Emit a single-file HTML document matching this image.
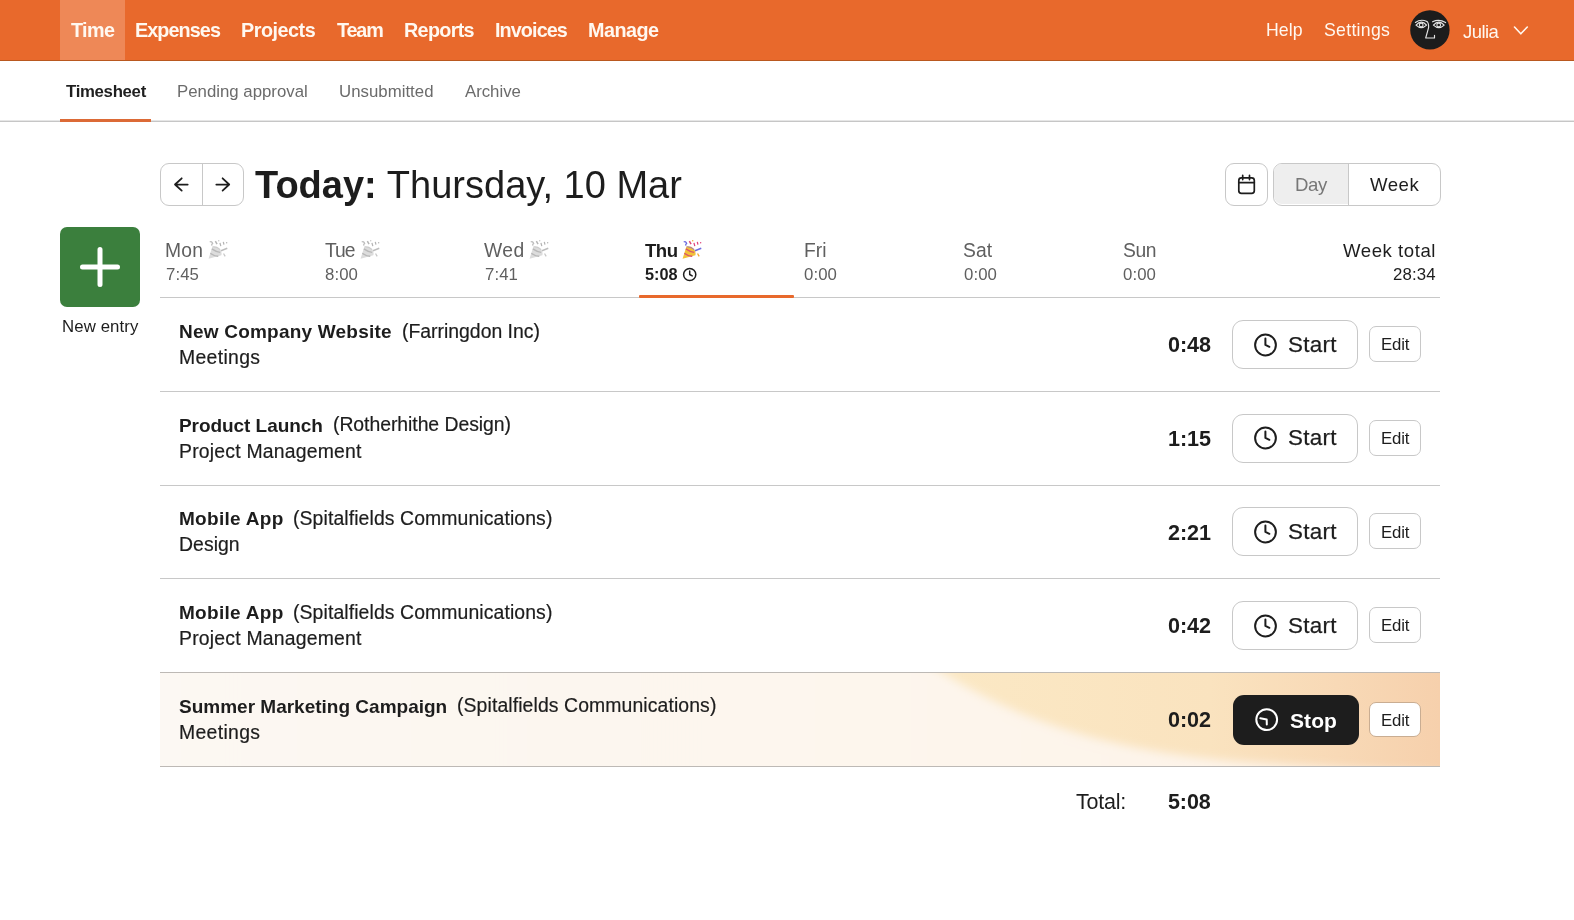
<!DOCTYPE html>
<html><head><meta charset="utf-8"><title>Timesheet</title>
<style>
html,body{margin:0;padding:0;background:#fff;}
body{width:1574px;height:920px;position:relative;overflow:hidden;font-family:"Liberation Sans",sans-serif;}
.t{position:absolute;line-height:1;white-space:pre;will-change:transform;}
</style></head><body>
<div style="position:absolute;left:0px;top:0px;width:1574px;height:60px;box-sizing:border-box;background:#e8692c;"></div>
<div style="position:absolute;left:0px;top:60px;width:1574px;height:1px;box-sizing:border-box;background:#b9581f;"></div>
<div style="position:absolute;left:60px;top:0px;width:65px;height:60px;box-sizing:border-box;background:#ee8857;"></div>
<div class="t" style="left:71.00px;top:20.84px;font-size:19.8px;font-weight:700;color:#fff8f0;letter-spacing:-0.639px;">Time</div>
<div class="t" style="left:135.30px;top:20.84px;font-size:19.8px;font-weight:700;color:#fff8f0;letter-spacing:-0.920px;">Expenses</div>
<div class="t" style="left:240.70px;top:20.84px;font-size:19.8px;font-weight:700;color:#fff8f0;letter-spacing:-0.480px;">Projects</div>
<div class="t" style="left:336.50px;top:20.84px;font-size:19.8px;font-weight:700;color:#fff8f0;letter-spacing:-1.139px;">Team</div>
<div class="t" style="left:403.70px;top:20.84px;font-size:19.8px;font-weight:700;color:#fff8f0;letter-spacing:-0.688px;">Reports</div>
<div class="t" style="left:494.60px;top:20.84px;font-size:19.8px;font-weight:700;color:#fff8f0;letter-spacing:-0.905px;">Invoices</div>
<div class="t" style="left:587.50px;top:20.84px;font-size:19.8px;font-weight:700;color:#fff8f0;letter-spacing:-0.520px;">Manage</div>
<div class="t" style="left:1266.20px;top:22.02px;font-size:17.7px;color:#fff8f0;letter-spacing:0.074px;">Help</div>
<div class="t" style="left:1323.90px;top:22.02px;font-size:17.7px;color:#fff8f0;letter-spacing:0.280px;">Settings</div>
<div class="t" style="left:1462.70px;top:22.64px;font-size:18.5px;color:#fff8f0;letter-spacing:-0.570px;">Julia</div>
<svg style="position:absolute;left:1512px;top:24px" width="18" height="13" viewBox="0 0 18 13"><path d="M2.5 3 L8.8 9.8 L15.3 3" fill="none" stroke="#fff8f0" stroke-width="1.6" stroke-linecap="round" stroke-linejoin="round"/></svg>
<svg style="position:absolute;left:1408px;top:8px" width="44" height="44" viewBox="0 0 44 44">
<circle cx="21.9" cy="21.9" r="19.7" fill="#1c1c1c"/>
<g fill="none" stroke="#e4e4e4" stroke-width="1.15" stroke-linecap="round" stroke-linejoin="round">
<path d="M7.4 14.4 Q13 10.6 19 13.6"/>
<path d="M8 17.2 Q13.3 11 18.6 17.2 Q13.3 22.2 8 17.2 Z"/>
<path d="M24.6 13.8 Q31 10.6 37.6 14.6"/>
<path d="M25.4 17.2 Q30.8 11 36.2 17.2 Q30.8 22.2 25.4 17.2 Z"/>
<path d="M19 13.6 Q20.9 15 20.6 19.6 L17.7 30 L26.5 30 L26.5 27.2"/>
</g>
<circle cx="13.2" cy="17" r="2.4" fill="#e4e4e4"/><circle cx="13.2" cy="17" r="1.3" fill="#1c1c1c"/>
<circle cx="30.7" cy="17" r="2.4" fill="#e4e4e4"/><circle cx="30.7" cy="17" r="1.3" fill="#1c1c1c"/>
</svg>
<div class="t" style="left:66.00px;top:84.48px;font-size:16.8px;font-weight:700;color:#1f1f1f;letter-spacing:-0.311px;">Timesheet</div>
<div class="t" style="left:176.70px;top:84.48px;font-size:16.8px;color:#6b6b6b;letter-spacing:0.008px;">Pending approval</div>
<div class="t" style="left:338.90px;top:84.48px;font-size:16.8px;color:#6b6b6b;letter-spacing:0.026px;">Unsubmitted</div>
<div class="t" style="left:464.70px;top:84.48px;font-size:16.8px;color:#6b6b6b;letter-spacing:-0.017px;">Archive</div>
<div style="position:absolute;left:0px;top:120px;width:1574px;height:1px;box-sizing:border-box;background:#e6e6e6;"></div>
<div style="position:absolute;left:0px;top:121px;width:1574px;height:1px;box-sizing:border-box;background:#c6c6c6;"></div>
<div style="position:absolute;left:60px;top:119px;width:91px;height:3px;box-sizing:border-box;background:#dc6a36;"></div>
<div style="position:absolute;left:160px;top:163px;width:84px;height:43px;box-sizing:border-box;border:1.2px solid #c8c8c8;border-radius:9px;background:#fff;"></div>
<div style="position:absolute;left:201.5px;top:163px;width:1.1999999999999886px;height:43px;box-sizing:border-box;background:#c8c8c8;"></div>
<svg style="position:absolute;left:160px;top:163px" width="84" height="43" viewBox="0 0 84 43"><g fill="none" stroke="#1d1d1d" stroke-width="1.75" stroke-linecap="round" stroke-linejoin="round"><path d="M27.7 21.5 H15 M21.7 15.3 L15 21.5 L21.7 27.6"/><path d="M56.3 21.5 H69.2 M62.6 15.3 L69.2 21.5 L62.6 27.6"/></g></svg>
<div class="t" style="left:255.00px;top:166.03px;font-size:38px;font-weight:700;color:#1d1d1d;letter-spacing:0.000px;">Today:</div>
<div class="t" style="left:376.74px;top:166.03px;font-size:38px;color:#1d1d1d;letter-spacing:0.000px;"> Thursday, 10 Mar</div>
<div style="position:absolute;left:1225px;top:163px;width:42.5px;height:42.5px;box-sizing:border-box;border:1.2px solid #c8c8c8;border-radius:9px;background:#fff;"></div>
<svg style="position:absolute;left:1230px;top:168px" width="32" height="32" viewBox="0 0 32 32"><g fill="none" stroke="#1d1d1d" stroke-width="1.7" stroke-linecap="round"><rect x="8.8" y="9.8" width="15.5" height="15.5" rx="2.6"/><path d="M8.8 14.6 H24.3"/><path d="M12.7 7.4 V11.6 M19.5 7.4 V11.6"/></g></svg>
<div style="position:absolute;left:1272.5px;top:163px;width:168.0px;height:42.5px;box-sizing:border-box;border:1.2px solid #c8c8c8;border-radius:9px;background:#fff;overflow:hidden;"></div>
<div style="position:absolute;left:1273.5px;top:164.2px;width:74.5px;height:40.10000000000002px;box-sizing:border-box;background:#eeeeee;border-radius:8px 0 0 8px;"></div>
<div style="position:absolute;left:1347.8px;top:163px;width:1.2000000000000455px;height:42.5px;box-sizing:border-box;background:#c8c8c8;"></div>
<div class="t" style="left:1294.90px;top:175.56px;font-size:18.6px;color:#777777;letter-spacing:-0.326px;">Day</div>
<div class="t" style="left:1369.50px;top:175.56px;font-size:18.6px;color:#1d1d1d;letter-spacing:0.523px;">Week</div>
<div style="position:absolute;left:60px;top:227px;width:80px;height:80px;box-sizing:border-box;background:#3b7f3d;border-radius:7px;"></div>
<svg style="position:absolute;left:60px;top:227px" width="80" height="80" viewBox="0 0 80 80"><g stroke="#fff" stroke-width="5" stroke-linecap="round"><path d="M22.5 40 H57.5 M40 22.5 V57.5"/></g></svg>
<div class="t" style="left:62.00px;top:319.18px;font-size:16.8px;color:#1d1d1d;letter-spacing:0.108px;">New entry</div>
<div class="t" style="left:165.20px;top:241.36px;font-size:19.3px;color:#5f5f5f;letter-spacing:0.218px;">Mon</div>
<div class="t" style="left:165.70px;top:266.68px;font-size:16.8px;color:#5f5f5f;letter-spacing:0.075px;">7:45</div>
<svg style="position:absolute;left:207.20000000000002px;top:238.4px" width="23" height="23" viewBox="0 0 22 22">
<path d="M1.5 19.8 L5.2 8.2 Q9 7 12.2 10.2 Q14.6 13.2 13.8 16.4 Z" fill="#dcdcdc"/>
<path d="M3.2 14.6 Q7.2 17.6 10.8 17.4" stroke="#b8b8b8" stroke-width="1.3" fill="none"/>
<path d="M4.6 10.4 Q9 13.4 12.6 13.8" stroke="#b8b8b8" stroke-width="1.2" fill="none"/>
<path d="M5.4 8.4 Q9.6 8.2 12.6 11.2" stroke="#c4c4c4" stroke-width="1" fill="none" opacity=".7"/>
<path d="M2.6 3.8 Q4.6 2.8 5.4 5.2 Q3.8 6.4 5 7.2" stroke="#bdbdbd" stroke-width="1.2" fill="none"/>
<path d="M8 3 L9.6 5.8" stroke="#b5b5b5" stroke-width="1.4" fill="none"/>
<path d="M12.4 4.6 L13.2 7.8 M15.6 3.8 L16.2 6.4" stroke="#b5b5b5" stroke-width="1.2" fill="none"/>
<path d="M13.4 12.2 L19.4 9.8" stroke="#bdbdbd" stroke-width="1.3" fill="none"/>
<path d="M15.8 14.8 L17.4 17.6" stroke="#c8c8c8" stroke-width="1.2" fill="none"/>
<circle cx="11.2" cy="2.6" r=".7" fill="#c8c8c8"/><circle cx="18.8" cy="4.6" r=".7" fill="#b5b5b5"/>
</svg>
<div class="t" style="left:324.80px;top:241.36px;font-size:19.3px;color:#5f5f5f;letter-spacing:-0.981px;">Tue</div>
<div class="t" style="left:325.30px;top:266.68px;font-size:16.8px;color:#5f5f5f;letter-spacing:0.075px;">8:00</div>
<svg style="position:absolute;left:358.59999999999997px;top:238.4px" width="23" height="23" viewBox="0 0 22 22">
<path d="M1.5 19.8 L5.2 8.2 Q9 7 12.2 10.2 Q14.6 13.2 13.8 16.4 Z" fill="#dcdcdc"/>
<path d="M3.2 14.6 Q7.2 17.6 10.8 17.4" stroke="#b8b8b8" stroke-width="1.3" fill="none"/>
<path d="M4.6 10.4 Q9 13.4 12.6 13.8" stroke="#b8b8b8" stroke-width="1.2" fill="none"/>
<path d="M5.4 8.4 Q9.6 8.2 12.6 11.2" stroke="#c4c4c4" stroke-width="1" fill="none" opacity=".7"/>
<path d="M2.6 3.8 Q4.6 2.8 5.4 5.2 Q3.8 6.4 5 7.2" stroke="#bdbdbd" stroke-width="1.2" fill="none"/>
<path d="M8 3 L9.6 5.8" stroke="#b5b5b5" stroke-width="1.4" fill="none"/>
<path d="M12.4 4.6 L13.2 7.8 M15.6 3.8 L16.2 6.4" stroke="#b5b5b5" stroke-width="1.2" fill="none"/>
<path d="M13.4 12.2 L19.4 9.8" stroke="#bdbdbd" stroke-width="1.3" fill="none"/>
<path d="M15.8 14.8 L17.4 17.6" stroke="#c8c8c8" stroke-width="1.2" fill="none"/>
<circle cx="11.2" cy="2.6" r=".7" fill="#c8c8c8"/><circle cx="18.8" cy="4.6" r=".7" fill="#b5b5b5"/>
</svg>
<div class="t" style="left:484.10px;top:241.36px;font-size:19.3px;color:#5f5f5f;letter-spacing:0.421px;">Wed</div>
<div class="t" style="left:484.60px;top:266.68px;font-size:16.8px;color:#5f5f5f;letter-spacing:0.075px;">7:41</div>
<svg style="position:absolute;left:528.3px;top:238.4px" width="23" height="23" viewBox="0 0 22 22">
<path d="M1.5 19.8 L5.2 8.2 Q9 7 12.2 10.2 Q14.6 13.2 13.8 16.4 Z" fill="#dcdcdc"/>
<path d="M3.2 14.6 Q7.2 17.6 10.8 17.4" stroke="#b8b8b8" stroke-width="1.3" fill="none"/>
<path d="M4.6 10.4 Q9 13.4 12.6 13.8" stroke="#b8b8b8" stroke-width="1.2" fill="none"/>
<path d="M5.4 8.4 Q9.6 8.2 12.6 11.2" stroke="#c4c4c4" stroke-width="1" fill="none" opacity=".7"/>
<path d="M2.6 3.8 Q4.6 2.8 5.4 5.2 Q3.8 6.4 5 7.2" stroke="#bdbdbd" stroke-width="1.2" fill="none"/>
<path d="M8 3 L9.6 5.8" stroke="#b5b5b5" stroke-width="1.4" fill="none"/>
<path d="M12.4 4.6 L13.2 7.8 M15.6 3.8 L16.2 6.4" stroke="#b5b5b5" stroke-width="1.2" fill="none"/>
<path d="M13.4 12.2 L19.4 9.8" stroke="#bdbdbd" stroke-width="1.3" fill="none"/>
<path d="M15.8 14.8 L17.4 17.6" stroke="#c8c8c8" stroke-width="1.2" fill="none"/>
<circle cx="11.2" cy="2.6" r=".7" fill="#c8c8c8"/><circle cx="18.8" cy="4.6" r=".7" fill="#b5b5b5"/>
</svg>
<div class="t" style="left:644.60px;top:241.66px;font-size:18.6px;font-weight:700;color:#1d1d1d;letter-spacing:-0.529px;">Thu</div>
<div class="t" style="left:644.60px;top:266.10px;font-size:16.3px;font-weight:700;color:#1d1d1d;letter-spacing:-0.031px;">5:08</div>
<svg style="position:absolute;left:681.0px;top:238.4px" width="23" height="23" viewBox="0 0 22 22">
<path d="M1.5 19.8 L5.2 8.2 Q9 7 12.2 10.2 Q14.6 13.2 13.8 16.4 Z" fill="#f2c23a"/>
<path d="M3.2 14.6 Q7.2 17.6 10.8 17.4" stroke="#d9556e" stroke-width="1.3" fill="none"/>
<path d="M4.6 10.4 Q9 13.4 12.6 13.8" stroke="#d9556e" stroke-width="1.2" fill="none"/>
<path d="M5.4 8.4 Q9.6 8.2 12.6 11.2" stroke="#8a5fd0" stroke-width="1" fill="none" opacity=".7"/>
<path d="M2.6 3.8 Q4.6 2.8 5.4 5.2 Q3.8 6.4 5 7.2" stroke="#6b6be0" stroke-width="1.2" fill="none"/>
<path d="M8 3 L9.6 5.8" stroke="#e0457a" stroke-width="1.4" fill="none"/>
<path d="M12.4 4.6 L13.2 7.8 M15.6 3.8 L16.2 6.4" stroke="#e0457a" stroke-width="1.2" fill="none"/>
<path d="M13.4 12.2 L19.4 9.8" stroke="#6b6be0" stroke-width="1.3" fill="none"/>
<path d="M15.8 14.8 L17.4 17.6" stroke="#f0a830" stroke-width="1.2" fill="none"/>
<circle cx="11.2" cy="2.6" r=".7" fill="#f0a830"/><circle cx="18.8" cy="4.6" r=".7" fill="#e0457a"/>
</svg>
<svg style="position:absolute;left:681px;top:266px" width="17" height="17" viewBox="0 0 17 17"><g fill="none" stroke="#1d1d1d" stroke-width="1.5" stroke-linecap="round" stroke-linejoin="round"><circle cx="8.7" cy="8.5" r="6.1"/><path d="M8.7 5 V8.5 L11.2 9.9"/></g></svg>
<div class="t" style="left:803.50px;top:241.36px;font-size:19.3px;color:#5f5f5f;letter-spacing:-0.035px;">Fri</div>
<div class="t" style="left:804.00px;top:266.68px;font-size:16.8px;color:#5f5f5f;letter-spacing:0.075px;">0:00</div>
<div class="t" style="left:963.30px;top:241.36px;font-size:19.3px;color:#5f5f5f;letter-spacing:0.077px;">Sat</div>
<div class="t" style="left:963.80px;top:266.68px;font-size:16.8px;color:#5f5f5f;letter-spacing:0.075px;">0:00</div>
<div class="t" style="left:1122.70px;top:241.36px;font-size:19.3px;color:#5f5f5f;letter-spacing:-0.381px;">Sun</div>
<div class="t" style="left:1123.20px;top:266.68px;font-size:16.8px;color:#5f5f5f;letter-spacing:0.075px;">0:00</div>
<div class="t" style="right:138.25px;top:241.86px;font-size:18.6px;color:#1d1d1d;letter-spacing:0.547px;">Week total</div>
<div class="t" style="right:138.65px;top:267.18px;font-size:16.8px;color:#1d1d1d;letter-spacing:0.152px;">28:34</div>
<div style="position:absolute;left:160px;top:297px;width:1280px;height:1px;box-sizing:border-box;background:#c8c8c8;"></div>
<div style="position:absolute;left:639px;top:295px;width:155px;height:3px;box-sizing:border-box;background:#e8692c;border-radius:1px;"></div>
<div class="t" style="left:179.20px;top:321.92px;font-size:19px;font-weight:700;color:#1d1d1d;letter-spacing:0.216px;">New Company Website</div>
<div class="t" style="left:401.60px;top:321.58px;font-size:19.4px;color:#1d1d1d;letter-spacing:-0.001px;-webkit-text-stroke:0.2px #1d1d1d;">(Farringdon Inc)</div>
<div class="t" style="left:179.20px;top:347.88px;font-size:19.4px;color:#1d1d1d;letter-spacing:0.322px;-webkit-text-stroke:0.2px #1d1d1d;">Meetings</div>
<div class="t" style="right:363.26px;top:334.22px;font-size:21.6px;font-weight:700;color:#1d1d1d;letter-spacing:-0.058px;">0:48</div>
<div style="position:absolute;left:1232.3px;top:320.1px;width:126.20000000000005px;height:49.0px;box-sizing:border-box;border:1.2px solid #c8c8c8;border-radius:11px;background:#fff;"></div>
<svg style="position:absolute;left:1248px;top:326.5px" width="36" height="36" viewBox="0 0 36 36"><g fill="none" stroke="#1d1d1d" stroke-width="2" stroke-linecap="round" stroke-linejoin="round"><circle cx="17.5" cy="18" r="10.4"/><path d="M17.4 11.6 V17.9 L21.4 19.8"/></g></svg>
<div class="t" style="left:1288.20px;top:333.54px;font-size:22.4px;color:#1d1d1d;letter-spacing:0.299px;-webkit-text-stroke:0.25px #1d1d1d;">Start</div>
<div style="position:absolute;left:1369px;top:326.1px;width:52px;height:36.0px;box-sizing:border-box;border:1.2px solid #c8c8c8;border-radius:7px;background:#fff;"></div>
<div class="t" style="left:1380.60px;top:337.48px;font-size:16.8px;color:#1d1d1d;letter-spacing:-0.162px;">Edit</div>
<div style="position:absolute;left:160px;top:391px;width:1280px;height:1px;box-sizing:border-box;background:#c8c8c8;"></div>
<div class="t" style="left:179.20px;top:415.59px;font-size:19px;font-weight:700;color:#1d1d1d;letter-spacing:-0.059px;">Product Launch</div>
<div class="t" style="left:332.60px;top:415.25px;font-size:19.4px;color:#1d1d1d;letter-spacing:-0.050px;-webkit-text-stroke:0.2px #1d1d1d;">(Rotherhithe Design)</div>
<div class="t" style="left:179.20px;top:441.55px;font-size:19.4px;color:#1d1d1d;letter-spacing:0.205px;-webkit-text-stroke:0.2px #1d1d1d;">Project Management</div>
<div class="t" style="right:363.26px;top:427.89px;font-size:21.6px;font-weight:700;color:#1d1d1d;letter-spacing:-0.058px;">1:15</div>
<div style="position:absolute;left:1232.3px;top:413.77000000000004px;width:126.20000000000005px;height:49.0px;box-sizing:border-box;border:1.2px solid #c8c8c8;border-radius:11px;background:#fff;"></div>
<svg style="position:absolute;left:1248px;top:420.2px" width="36" height="36" viewBox="0 0 36 36"><g fill="none" stroke="#1d1d1d" stroke-width="2" stroke-linecap="round" stroke-linejoin="round"><circle cx="17.5" cy="18" r="10.4"/><path d="M17.4 11.6 V17.9 L21.4 19.8"/></g></svg>
<div class="t" style="left:1288.20px;top:427.21px;font-size:22.4px;color:#1d1d1d;letter-spacing:0.299px;-webkit-text-stroke:0.25px #1d1d1d;">Start</div>
<div style="position:absolute;left:1369px;top:419.77000000000004px;width:52px;height:35.99999999999994px;box-sizing:border-box;border:1.2px solid #c8c8c8;border-radius:7px;background:#fff;"></div>
<div class="t" style="left:1380.60px;top:431.15px;font-size:16.8px;color:#1d1d1d;letter-spacing:-0.162px;">Edit</div>
<div style="position:absolute;left:160px;top:485px;width:1280px;height:1px;box-sizing:border-box;background:#c8c8c8;"></div>
<div class="t" style="left:179.20px;top:509.26px;font-size:19px;font-weight:700;color:#1d1d1d;letter-spacing:0.293px;">Mobile App</div>
<div class="t" style="left:293.40px;top:508.92px;font-size:19.4px;color:#1d1d1d;letter-spacing:0.103px;-webkit-text-stroke:0.2px #1d1d1d;">(Spitalfields Communications)</div>
<div class="t" style="left:179.20px;top:535.22px;font-size:19.4px;color:#1d1d1d;letter-spacing:0.052px;-webkit-text-stroke:0.2px #1d1d1d;">Design</div>
<div class="t" style="right:363.26px;top:521.56px;font-size:21.6px;font-weight:700;color:#1d1d1d;letter-spacing:-0.058px;">2:21</div>
<div style="position:absolute;left:1232.3px;top:507.44000000000005px;width:126.20000000000005px;height:49.0px;box-sizing:border-box;border:1.2px solid #c8c8c8;border-radius:11px;background:#fff;"></div>
<svg style="position:absolute;left:1248px;top:513.8px" width="36" height="36" viewBox="0 0 36 36"><g fill="none" stroke="#1d1d1d" stroke-width="2" stroke-linecap="round" stroke-linejoin="round"><circle cx="17.5" cy="18" r="10.4"/><path d="M17.4 11.6 V17.9 L21.4 19.8"/></g></svg>
<div class="t" style="left:1288.20px;top:520.88px;font-size:22.4px;color:#1d1d1d;letter-spacing:0.299px;-webkit-text-stroke:0.25px #1d1d1d;">Start</div>
<div style="position:absolute;left:1369px;top:513.44px;width:52px;height:36.0px;box-sizing:border-box;border:1.2px solid #c8c8c8;border-radius:7px;background:#fff;"></div>
<div class="t" style="left:1380.60px;top:524.82px;font-size:16.8px;color:#1d1d1d;letter-spacing:-0.162px;">Edit</div>
<div style="position:absolute;left:160px;top:578px;width:1280px;height:1px;box-sizing:border-box;background:#c8c8c8;"></div>
<div class="t" style="left:179.20px;top:602.93px;font-size:19px;font-weight:700;color:#1d1d1d;letter-spacing:0.293px;">Mobile App</div>
<div class="t" style="left:293.40px;top:602.59px;font-size:19.4px;color:#1d1d1d;letter-spacing:0.103px;-webkit-text-stroke:0.2px #1d1d1d;">(Spitalfields Communications)</div>
<div class="t" style="left:179.20px;top:628.89px;font-size:19.4px;color:#1d1d1d;letter-spacing:0.205px;-webkit-text-stroke:0.2px #1d1d1d;">Project Management</div>
<div class="t" style="right:363.26px;top:615.23px;font-size:21.6px;font-weight:700;color:#1d1d1d;letter-spacing:-0.058px;">0:42</div>
<div style="position:absolute;left:1232.3px;top:601.11px;width:126.20000000000005px;height:49.0px;box-sizing:border-box;border:1.2px solid #c8c8c8;border-radius:11px;background:#fff;"></div>
<svg style="position:absolute;left:1248px;top:607.5px" width="36" height="36" viewBox="0 0 36 36"><g fill="none" stroke="#1d1d1d" stroke-width="2" stroke-linecap="round" stroke-linejoin="round"><circle cx="17.5" cy="18" r="10.4"/><path d="M17.4 11.6 V17.9 L21.4 19.8"/></g></svg>
<div class="t" style="left:1288.20px;top:614.55px;font-size:22.4px;color:#1d1d1d;letter-spacing:0.299px;-webkit-text-stroke:0.25px #1d1d1d;">Start</div>
<div style="position:absolute;left:1369px;top:607.11px;width:52px;height:36.0px;box-sizing:border-box;border:1.2px solid #c8c8c8;border-radius:7px;background:#fff;"></div>
<div class="t" style="left:1380.60px;top:618.49px;font-size:16.8px;color:#1d1d1d;letter-spacing:-0.162px;">Edit</div>
<div style="position:absolute;left:160px;top:672px;width:1280px;height:1px;box-sizing:border-box;background:#c8c8c8;"></div>
<div style="position:absolute;left:160px;top:672px;width:1280px;height:1px;box-sizing:border-box;background:#bdb9b5;"></div>
<svg style="position:absolute;left:160px;top:673px" width="1280" height="93" viewBox="0 0 1280 93" preserveAspectRatio="none">
<defs><linearGradient id="wg" x1="0" y1="0" x2="1" y2="0"><stop offset="0" stop-color="#fcecd0"/><stop offset="0.62" stop-color="#fbe8c4"/><stop offset="0.82" stop-color="#fae3bf"/><stop offset="0.92" stop-color="#f8d9b6"/><stop offset="1" stop-color="#f6d0ac"/></linearGradient>
<linearGradient id="cg" x1="0" y1="0" x2="1" y2="0"><stop offset="0" stop-color="#fcf8f3"/><stop offset="0.6" stop-color="#fdf5ec"/><stop offset="1" stop-color="#fdf2e6"/></linearGradient>
<filter id="bl" x="-5%" y="-50%" width="110%" height="200%"><feGaussianBlur stdDeviation="5"/></filter></defs>
<rect width="1280" height="94" fill="url(#wg)"/>
<path d="M-20 -20 H752 C 850 48, 950 80, 1100 90 S 1250 96, 1320 104 V 130 H -20 Z" fill="url(#cg)" filter="url(#bl)"/>
</svg>
<div class="t" style="left:179.20px;top:696.60px;font-size:19px;font-weight:700;color:#1d1d1d;letter-spacing:0.001px;">Summer Marketing Campaign</div>
<div class="t" style="left:457.00px;top:696.26px;font-size:19.4px;color:#1d1d1d;letter-spacing:0.103px;-webkit-text-stroke:0.2px #1d1d1d;">(Spitalfields Communications)</div>
<div class="t" style="left:179.20px;top:722.56px;font-size:19.4px;color:#1d1d1d;letter-spacing:0.322px;-webkit-text-stroke:0.2px #1d1d1d;">Meetings</div>
<div class="t" style="right:363.26px;top:708.90px;font-size:21.6px;font-weight:700;color:#1d1d1d;letter-spacing:-0.058px;">0:02</div>
<div style="position:absolute;left:1233px;top:694.6800000000001px;width:126px;height:50.10000000000002px;box-sizing:border-box;background:#1d1d1d;border-radius:11px;"></div>
<svg style="position:absolute;left:1248px;top:701.5px" width="36" height="36" viewBox="0 0 36 36"><g fill="none" stroke="#fff" stroke-width="2" stroke-linecap="round" stroke-linejoin="round"><circle cx="18.7" cy="17.6" r="10.4"/><path d="M12.3 16.2 L18.7 17.5 L18.8 22.6"/></g></svg>
<div class="t" style="left:1290.00px;top:709.70px;font-size:21px;font-weight:700;color:#ffffff;letter-spacing:0.086px;">Stop</div>
<div style="position:absolute;left:1369px;top:701.6800000000001px;width:52px;height:35.299999999999955px;box-sizing:border-box;border:1.2px solid #c9ad92;border-radius:7px;background:#fff;"></div>
<div class="t" style="left:1380.60px;top:713.16px;font-size:16.8px;color:#1d1d1d;letter-spacing:-0.162px;">Edit</div>
<div style="position:absolute;left:160px;top:766px;width:1280px;height:1px;box-sizing:border-box;background:#bdb9b5;"></div>
<div class="t" style="left:1076.00px;top:792.10px;font-size:21.5px;color:#1d1d1d;letter-spacing:-0.215px;">Total:</div>
<div class="t" style="right:363.38px;top:792.10px;font-size:21.5px;font-weight:700;color:#1d1d1d;letter-spacing:-0.083px;">5:08</div>
</body></html>
